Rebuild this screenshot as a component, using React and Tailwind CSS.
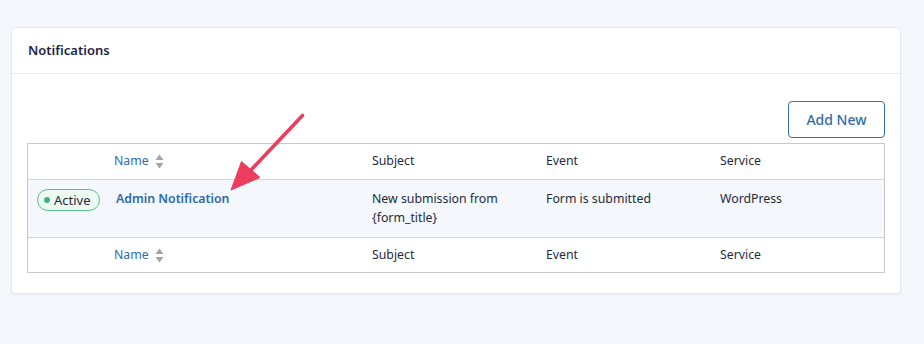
import React from "react";

function SortIcon() {
  return (
    <svg width="9" height="15" viewBox="0 0 9 15" className="ml-[6px]">
      <path d="M4.5 0.5 L8.5 6 L0.5 6 Z" fill="#a0a3ab" />
      <path d="M0.5 9 L8.5 9 L4.5 14.5 Z" fill="#a0a3ab" />
    </svg>
  );
}

function HeadRow({ border, h }) {
  return (
    <div className={`grid grid-cols-[77px_258px_174px_174px_1fr] ${h} items-center text-[12.3px] text-[#1f2a3c] ${border}`}>
      <div />
      <div className="pl-[9px] flex items-center text-[#2f6cab]">
        Name
        <SortIcon />
      </div>
      <div className="pl-[9px]">Subject</div>
      <div className="pl-[9px]">Event</div>
      <div className="pl-[9px]">Service</div>
    </div>
  );
}

export default function App() {
  return (
    <div
      className="min-h-[344px] w-[924px] bg-[#f4f7fb] pt-[27px] pl-[11px] relative"
      style={{ fontFamily: '"Noto Sans", "Open Sans", sans-serif' }}
    >
      <div className="w-[890px] bg-white border border-[#e4e8f0] rounded-[4px] shadow-[0_1px_2px_rgba(30,40,90,0.06)]">
        <div className="h-[46px] flex items-center px-[16px] border-b border-[#e6e9ef]">
          <span className="text-[13px] font-semibold text-[#1e1f4b]">Notifications</span>
        </div>
        <div className="px-[15px] pt-[27px] pb-[20px]">
          <div className="flex justify-end mb-[5px]">
            <button className="w-[97px] h-[37px] border border-[#2f73b4] rounded-[4px] text-[14px] font-medium text-[#2f6cab] bg-white">
              Add New
            </button>
          </div>
          <div className="border border-[#c6c8cc]">
            <HeadRow border="border-b border-[#d4d7e0]" h="h-[36px]" />
            <div className="grid grid-cols-[77px_258px_174px_174px_1fr] bg-[#f4f7fb] border-b border-[#d4d7e0] pt-[9px] pb-[10px] text-[12.3px] leading-[19px] text-[#1f2a3c]">
              <div className="pl-[9px]">
                <span className="inline-flex items-center h-[22px] pl-[6px] pr-[8px] rounded-full border border-[#5cc08f] bg-[#edfaf3] text-[#1f2a3c] text-[13px]">
                  <span className="w-[6px] h-[6px] rounded-full bg-[#3fb27a] mr-[4px]" />
                  Active
                </span>
              </div>
              <div className="pl-[11px] font-semibold text-[#2d6aab]">Admin Notification</div>
              <div className="pl-[9px]">
                New submission from
                <br />
                {"{form_title}"}
              </div>
              <div className="pl-[9px]">Form is submitted</div>
              <div className="pl-[9px]">WordPress</div>
            </div>
            <HeadRow border="" h="h-[34px]" />
          </div>
        </div>
      </div>
      <svg
        className="absolute left-0 top-0 pointer-events-none"
        width="924"
        height="344"
        viewBox="0 0 924 344"
      >
        <line x1="302.5" y1="115.5" x2="250" y2="171" stroke="#ec3d5f" strokeWidth="3.6" strokeLinecap="round" />
        <path d="M231 190 L241.5 161.5 L260 177.5 Z" fill="#ec3d5f" strokeLinejoin="round" stroke="#ec3d5f" strokeWidth="1" />
      </svg>
    </div>
  );
}
